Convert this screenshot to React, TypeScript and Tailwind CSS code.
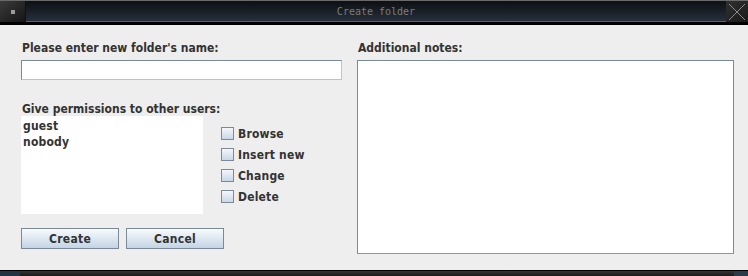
import React from 'react'

const USERS = ['guest', 'nobody']
const PERMISSIONS = ['Browse', 'Insert new', 'Change', 'Delete']

const font = "font-['DejaVu_Sans_Condensed','DejaVu_Sans',sans-serif]"

function Checkbox({ label }: { label: string }) {
    return (
        <label className="flex h-[21px] items-center gap-[4px]">
            <span className="h-[13px] w-[13px] border border-[#7a8a99] bg-gradient-to-b from-[#f4f7fb] to-[#c9d7e6]" />
            <span className="text-[12px] font-bold tracking-[0.2px] text-[#333]">{label}</span>
        </label>
    )
}

function Button({ children }: { children: React.ReactNode }) {
    return (
        <button className="flex h-[21px] w-[98px] items-center justify-center border border-[#7a8a99] bg-gradient-to-b from-[#f8fafc] to-[#c4d4e5] text-[12px] font-bold tracking-[0.3px] text-[#333]">
            {children}
        </button>
    )
}

export default function App() {
    return (
        <div className={`flex h-[276px] w-[748px] flex-col bg-[#eeeeee] ${font}`}>
            {/* title bar */}
            <div className="flex h-[22px] border-t border-[#6a6a6a] bg-gradient-to-b from-[#0d1014] to-[#27313d]">
                <div className="flex w-[26px] items-center justify-center border-r border-[#111] bg-gradient-to-br from-[#3a3a3a] to-[#161616]">
                    <span className="h-[4px] w-[4px] bg-[#9a9a9a]" />
                </div>
                <div className="flex flex-1 items-center justify-center border-b border-[#50647a] font-['DejaVu_Sans_Mono',monospace] text-[10px] text-[#7c7c7c]">
                    Create folder
                </div>
                <div className="flex w-[22px] items-center justify-center bg-gradient-to-br from-[#303030] to-[#1a1a1a]">
                    <svg width="20" height="20" viewBox="0 0 20 20">
                        <path d="M2 2 L18 18 M18 2 L2 18" stroke="#8a8a8a" strokeWidth="1" />
                    </svg>
                </div>
            </div>
            <div className="h-[3px] bg-black" />

            {/* content */}
            <div className="flex flex-1 gap-[15px] pl-[21px] pr-[14px] pt-[14px]">
                <div className="flex w-[321px] shrink-0 flex-col">
                    <div className="h-[21px] pl-px text-[12px] font-bold text-[#333]">Please enter new folder's name:</div>
                    <div className="h-[20px] border border-[#7a8a99] border-b-[#b8c4d0] border-r-[#b8c4d0] bg-white" />
                    <div className="mt-[23px] h-[13px] pl-px text-[12px] font-bold leading-[13px] text-[#333]">Give permissions to other users:</div>
                    <div className="flex gap-[18px]">
                        <div className="flex h-[98px] w-[182px] flex-col bg-white px-[2px] pt-[2px]">
                            {USERS.map(u => (
                                <div key={u} className="h-[16px] text-[12px] font-bold leading-[16px] tracking-[0.2px] text-[#333]">{u}</div>
                            ))}
                        </div>
                        <div className="flex flex-col pt-[7px]">
                            {PERMISSIONS.map(p => (
                                <Checkbox key={p} label={p} />
                            ))}
                        </div>
                    </div>
                    <div className="mt-[14px] flex gap-[7px]">
                        <Button>Create</Button>
                        <Button>Cancel</Button>
                    </div>
                </div>
                <div className="flex flex-1 flex-col">
                    <div className="h-[21px] pl-px text-[12px] font-bold text-[#333]">Additional notes:</div>
                    <div className="h-[194px] w-[377px] border border-[#7a8a99] border-b-[#8a98a6] bg-white" />
                </div>
            </div>

            {/* bottom frame */}
            <div className="flex h-[6px] border-t border-black">
                <div className="w-[20px] bg-[#223344]" />
                <div className="flex-1 bg-gradient-to-b from-[#333] to-[#1a1a1a]" />
                <div className="w-[14px] bg-[#2a3a4a]" />
            </div>
        </div>
    )
}
